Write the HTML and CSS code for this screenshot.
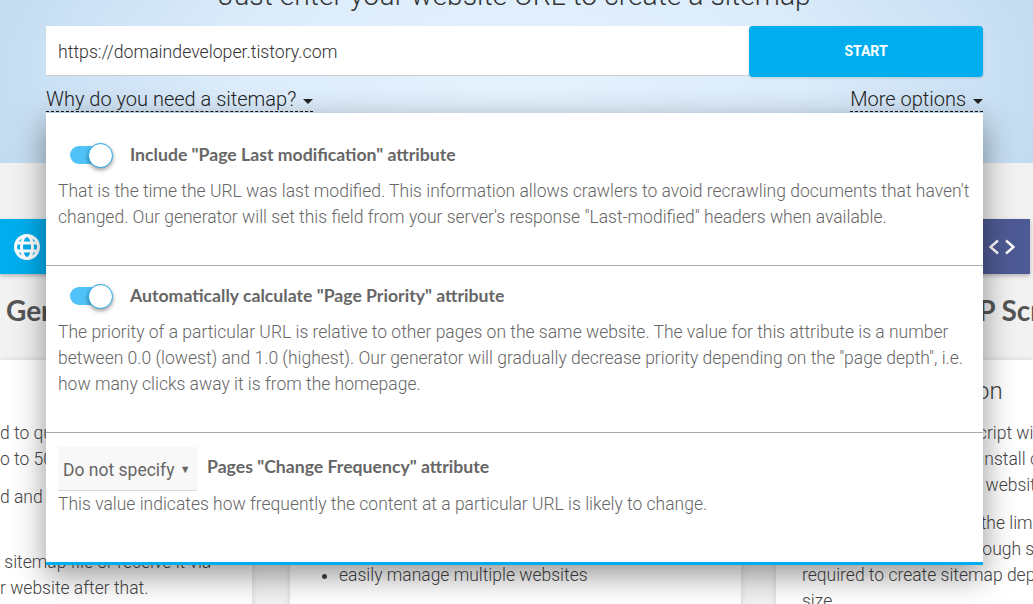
FILE: index.html
```html
<!DOCTYPE html>
<html>
<head>
	<meta charset="utf-8">
	<title>Sitemap generator</title>
	<link rel="stylesheet" href="styles.css">
</head>
<body>
	<div class="hero">
		<h1 class="heroTitle">Just enter your website URL to create a sitemap</h1>
		<div class="startForm">
			<div class="urlInput">https://domaindeveloper.tistory.com</div>
			<div class="startBtn">START</div>
		</div>
		<div class="toggleLinks">
			<span class="dashLink">Why do you need a sitemap? <i class="caret"></i></span>
			<span class="dashLink">More options <i class="caret"></i></span>
		</div>
	</div>

	<div class="tabs">
		<div class="tab tabBlue">
			<svg class="globe" viewBox="0 0 26 26" width="26" height="26">
				<circle cx="13" cy="13" r="11.5" fill="none" stroke="#fff" stroke-width="3"/>
				<ellipse cx="13" cy="13" rx="5.5" ry="11.5" fill="none" stroke="#fff" stroke-width="3"/>
				<path d="M2 9h22M2 17h22" stroke="#fff" stroke-width="3" fill="none"/>
			</svg>
		</div>
		<div class="tab tabIndigo">
			<svg viewBox="0 0 26 16" width="26" height="16">
				<path d="M9 1.500 1.500 8 9 14.500M17 1.500 24.500 8 17 14.500" stroke="#fff" stroke-width="2.400" fill="none"/>
			</svg>
		</div>
	</div>
	<div class="headings">
		<h2>Generator</h2>
		<h2>PHP Script</h2>
	</div>

	<div class="columns">
		<div class="card cardLeft">
			<p>d to quickly create<br>o to 500 pages</p>
			<p>d and your sitemap</p>
			<p class="viaLine">&nbsp;sitemap file or receive it via<br>r website after that.</p>
		</div>
		<div class="card cardMid">
			<ul>
				<li>easily manage multiple websites</li>
			</ul>
		</div>
		<div class="card cardRight">
			<h3>Standalone version</h3>
			<p>Your standalone PHP script will<br>You can download and install on<br>your own server for any website</p>
			<p>It can easily go beyond the limit<br>over 500 pages, even though some<br>required to create sitemap depends on<br>size</p>
		</div>
	</div>

	<div class="optionsPanel">
		<div class="optionRow">
			<div class="optionHead">
				<span class="switch"><i class="knob"></i></span>
				<b>Include "Page Last modification" attribute</b>
			</div>
			<p>That is the time the URL was last modified. This information allows crawlers to avoid recrawling documents that haven't changed. Our generator will set this field from your server's response "Last-modified" headers when available.</p>
		</div>
		<div class="optionRow">
			<div class="optionHead">
				<span class="switch"><i class="knob"></i></span>
				<b>Automatically calculate "Page Priority" attribute</b>
			</div>
			<p>The priority of a particular URL is relative to other pages on the same website. The value for this attribute is a number between 0.0 (lowest) and 1.0 (highest). Our generator will gradually decrease priority depending on the "page depth", i.e. how many clicks away it is from the homepage.</p>
		</div>
		<div class="optionRow lastRow">
			<div class="selectHead">
				<span class="fakeSelect">Do not specify <em>▼</em></span>
				<b>Pages "Change Frequency" attribute</b>
			</div>
			<p>This value indicates how frequently the content at a particular URL is likely to change.</p>
		</div>
	</div>
</body>
</html>
```

FILE: styles.css
```css
*{
	margin: 0px;
	padding: 0px;
	box-sizing: border-box;
}
html,body{
	height: 604px;
	overflow: hidden;
}
body{
	position: relative;
	background-color: #f2f2f2;
	font-family: "Roboto", "Liberation Sans", sans-serif;
	font-weight: 300;
	font-size: 17.5px;
	line-height: 26px;
	color: #444;
}

/* top block */
.hero{
	height: 163px;
	padding: 0px 50px 0px 46px;
	overflow: hidden;
	background: radial-gradient(ellipse 560px 260px at 50% 45%, #e5f2fe 0%, #dcecfb 50%, #c2dbf0 100%);
}
.heroTitle{
	height: 26px;
	font-size: 28.3px;
	font-weight: 300;
	line-height: 26px;
	margin-top: -17px;
	margin-bottom: 17px;
	text-align: center;
	color: #333;
	white-space: nowrap;
}
.startForm{
	display: flex;
	height: 51px;
	width: 937px;
}
.urlInput{
	width: 703px;
	height: 50px;
	padding: 0px 12px;
	background-color: #fff;
	border-bottom: 1px solid #ccc;
	font-size: 17.7px;
	font-weight: 300;
	line-height: 52px;
	color: #333;
}
.startBtn{
	width: 234px;
	background-color: #00aeef;
	border-radius: 4px;
	box-shadow: 0 1px 3px rgba(0,0,0,0.15);
	color: #fff;
	font-size: 14px;
	font-weight: 700;
	line-height: 50px;
	text-align: center;
}
.toggleLinks{
	display: flex;
	justify-content: space-between;
	width: 937px;
	margin-top: 10px;
}
.dashLink{
	height: 25px;
	font-size: 20px;
	line-height: 25px;
	color: #222;
	border-bottom: 1px dashed #111;
}
.caret{
	display: inline-block;
	margin-left: 2px;
	vertical-align: 2px;
	border-left: 5px solid transparent;
	border-right: 5px solid transparent;
	border-top: 5px solid #222;
}

/* tabs and headings behind the panel */
.tabs{
	display: flex;
	justify-content: space-between;
	padding-right: 3px;
	margin-top: 56px;
}
.tab{
	display: flex;
	align-items: center;
	height: 55px;
	box-shadow: 0 2px 4px rgba(0,0,0,0.25);
}
.tabBlue{
	width: 80px;
	padding-left: 14px;
	background-color: #00aeef;
}
.tabIndigo{
	width: 80px;
	padding-left: 39px;
	background-color: #4e5a94;
}
.headings{
	display: flex;
	justify-content: space-between;
	width: 1074px;
	height: 86px;
	padding: 18px 0px 0px 6px;
}
.headings h2{
	font-family: "Lato", "Liberation Sans", sans-serif;
	font-size: 28px;
	font-weight: 700;
	line-height: 36px;
	color: #555;
}

.columns{
	display: flex;
	justify-content: space-between;
}
.card{
	height: 250px;
	background-color: #fff;
	box-shadow: 0 0 6px rgba(0,0,0,0.12);
}
.card p{
	margin-bottom: 12px;
	white-space: nowrap;
}
.cardLeft{
	width: 252px;
	padding: 60px 0px 0px 0px;
}
.cardLeft .viaLine{
	margin-top: 39px;
}
.cardMid{
	width: 451px;
	margin-left: 38px;
}
.cardMid ul{
	padding: 202px 0px 0px 49px;
}
.cardRight{
	flex: 1;
	margin-left: 35px;
	padding: 16px 0px 0px 26px;
	overflow: hidden;
}
.cardRight h3{
	font-size: 24px;
	font-weight: 300;
	line-height: 30px;
	margin-bottom: 14px;
	white-space: nowrap;
}

/* more options dropdown */
.optionsPanel{
	position: absolute;
	left: 46px;
	top: 113px;
	width: 937px;
	height: 452px;
	background-color: #fff;
	border-bottom: 3px solid #00aeef;
	box-shadow: 0 10px 30px rgba(0,0,0,0.42);
	color: #666;
}
.optionRow{
	height: 153px;
	padding: 30px 12px 0px 12px;
	border-bottom: 1px solid #aaa;
}
.optionRow + .optionRow{
	height: 167px;
	padding-top: 18px;
}
.optionRow + .lastRow{
	height: auto;
	padding-top: 13px;
	border-bottom: 0px;
}
.optionHead{
	display: flex;
	align-items: center;
	height: 24px;
	padding-left: 12px;
	margin-bottom: 11px;
}
.optionHead b,.selectHead b{
	font-family: "Lato", "Liberation Sans", sans-serif;
	font-size: 17.65px;
	font-weight: 700;
	color: #666;
}
.switch{
	position: relative;
	display: block;
	width: 30px;
	height: 18px;
	margin-right: 30px;
	background-color: #4fc3f7;
	border-radius: 9px;
}
.knob{
	position: absolute;
	left: 18px;
	top: -3px;
	width: 25px;
	height: 25px;
	background-color: #fff;
	border: 1.5px solid #1ea7e6;
	border-radius: 50%;
	box-shadow: 0 2px 4px rgba(0,0,0,0.4);
}
.selectHead{
	display: flex;
	align-items: center;
	height: 45px;
}
.selectHead b{
	margin-left: 10px;
	margin-top: -3px;
}
.fakeSelect{
	display: block;
	width: 139px;
	height: 44px;
	padding-left: 5px;
	background-color: #f8f8f8;
	border-bottom: 1px solid #d8d8d8;
	font-size: 17.5px;
	font-weight: 400;
	line-height: 46px;
	color: #666;
}
.fakeSelect em{
	font-style: normal;
	font-size: 11px;
	margin-left: 1px;
	vertical-align: 3px;
}
```
